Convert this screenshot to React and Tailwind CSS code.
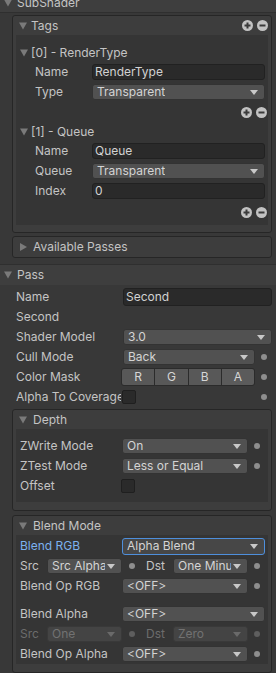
import React from 'react';

const Fold = ({ right }) => (
  <svg width="8" height="8" viewBox="0 0 8 8" className="shrink-0">
    {right ? (
      <polygon points="1,0 8,4 1,8" fill="#7a7a7a" />
    ) : (
      <polygon points="0,0.5 8,0.5 4,7.5" fill="#7a7a7a" />
    )}
  </svg>
);

const Caret = ({ dim }) => (
  <svg width="8" height="5" viewBox="0 0 8 5" className="absolute right-[6px] top-[5px]">
    <polygon points="0,0 8,0 4,5" fill={dim ? '#6a6a6a' : '#c8c8c8'} />
  </svg>
);

const PlusMinus = () => (
  <div className="flex gap-[4px]">
    <svg width="11" height="11" viewBox="0 0 11 11">
      <circle cx="5.5" cy="5.5" r="5.5" fill="#c2c2c2" />
      <path d="M2.5 5.5h6M5.5 2.5v6" stroke="#3a3a3a" strokeWidth="2" />
    </svg>
    <svg width="11" height="11" viewBox="0 0 11 11">
      <circle cx="5.5" cy="5.5" r="5.5" fill="#c2c2c2" />
      <path d="M2.5 5.5h6" stroke="#3a3a3a" strokeWidth="2" />
    </svg>
  </div>
);

const Dot = ({ dim }) => (
  <div className="w-[17px] shrink-0 pl-[6px] flex items-center">
    <div className={`w-[6px] h-[6px] rounded-full ${dim ? 'bg-[#5e5e5e]' : 'bg-[#8e8e8e]'}`} />
  </div>
);

const Field = ({ value, tall }) => (
  <div
    className={`flex-1 min-w-0 ${tall ? 'h-[18px]' : 'h-[16px]'} flex items-center rounded-[3px] bg-[#2a2a2a] border border-[#212121] pl-[2px] text-[#d2d2d2] whitespace-nowrap leading-[14px]`}
  >
    {value}
  </div>
);

const Drop = ({ value, dim, focus, className = 'flex-1' }) => (
  <div
    className={`${className} min-w-0 relative flex items-center rounded-[3px] pl-[4px] pr-[16px] whitespace-nowrap border ${
      focus
        ? 'bg-[#474747] border-[#4e8fdc] h-[17px]'
        : dim
        ? 'bg-[#444444] border-[#393939] h-[16px]'
        : 'bg-[#515151] border-[#333333] h-[16px]'
    } ${dim ? 'text-[#727272]' : 'text-[#d4d4d4]'}`}
  >
    <span className="overflow-hidden leading-[14px]">{value}</span>
    <Caret dim={dim} />
  </div>
);

const Box = ({ title, right, gap = 'gap-[6px]', extra, children, className = '' }) => (
  <div className={`ml-[12px] mr-[4px] border border-[#262626] rounded-[3px] bg-[#3d3d3d] ${className}`}>
    <div className={`h-[19px] flex items-center pl-[6px] pr-[3px] ${gap}`}>
      <Fold right={right} />
      <span className="flex-1">{title}</span>
      {extra}
    </div>
    {children}
  </div>
);

const Check = () => (
  <div className="w-[14px] h-[14px] shrink-0 rounded-[2px] bg-[#2a2a2a] border border-[#1f1f1f]" />
);

const App = () => {
  return (
    <div className="w-[276px] h-[673px] overflow-hidden bg-[#383838] font-[Inter,sans-serif] text-[12px] leading-none text-[#c4c4c4]">
      {/* SubShader header */}
      <div className="-mt-[7px] h-[20px] flex items-center gap-[5px] pl-[4px] bg-[#3e3e3e] border-b border-[#2f2f2f]">
        <Fold />
        <span>SubShader</span>
      </div>

      {/* Tags */}
      <Box title="Tags" gap="gap-[4px]" extra={<PlusMinus />} className="mt-[2px] pb-[7px]">
        <div className="mx-[3px] bg-[#353535] pt-[8px] pb-[2px]">
          <div className="h-[19px] flex items-center gap-[3px] pl-[4px]">
            <Fold />
            <span>[0] - RenderType</span>
          </div>
          <div className="h-[20px] flex items-center pl-[19px] pr-[3px]">
            <span className="w-[57px] shrink-0">Name</span>
            <Field value="RenderType" />
          </div>
          <div className="h-[20px] flex items-center pl-[19px] pr-[3px]">
            <span className="w-[57px] shrink-0">Type</span>
            <Drop value="Transparent" />
          </div>
          <div className="h-[21px] flex items-center justify-end pr-[1px]">
            <PlusMinus />
          </div>
          <div className="h-[18px] flex items-center gap-[3px] pl-[4px]">
            <Fold />
            <span>[1] - Queue</span>
          </div>
          <div className="h-[20px] flex items-center pl-[19px] pr-[3px]">
            <span className="w-[57px] shrink-0">Name</span>
            <Field value="Queue" />
          </div>
          <div className="h-[20px] flex items-center pl-[19px] pr-[3px]">
            <span className="w-[57px] shrink-0">Queue</span>
            <Drop value="Transparent" />
          </div>
          <div className="h-[20px] flex items-center pl-[19px] pr-[3px]">
            <span className="w-[57px] shrink-0">Index</span>
            <Field value="0" />
          </div>
          <div className="h-[22px] flex items-center justify-end pr-[1px]">
            <PlusMinus />
          </div>
        </div>
      </Box>

      {/* Available Passes */}
      <div className="ml-[12px] mr-[4px] mt-[3px] border border-[#262626] rounded-[3px] bg-[#3d3d3d] h-[22px] flex items-center gap-[6px] pl-[6px]">
        <Fold right />
        <span>Available Passes</span>
      </div>

      {/* Pass */}
      <div className="mt-[6px] h-[21px] flex items-center gap-[5px] pl-[4px] bg-[#3e3e3e] border-t border-[#2f2f2f]">
        <Fold />
        <span>Pass</span>
      </div>
      <div className="mt-[2px] pl-[16px] pr-[4px]">
        <div className="h-[20px] flex items-center">
          <span className="w-[107px] shrink-0">Name</span>
          <Field value="Second" tall />
        </div>
        <div className="h-[20px] flex items-center">
          <span>Second</span>
        </div>
        <div className="h-[20px] flex items-center">
          <span className="w-[107px] shrink-0">Shader Model</span>
          <Drop value="3.0" />
        </div>
        <div className="h-[20px] flex items-center">
          <span className="w-[107px] shrink-0">Cull Mode</span>
          <Drop value="Back" />
          <Dot />
        </div>
        <div className="h-[20px] flex items-center">
          <span className="w-[105px] shrink-0">Color Mask</span>
          <div className="flex-1 h-[18px] flex rounded-[3px] overflow-hidden border border-[#2b2b2b] bg-[#2b2b2b] gap-[1px] text-[#d6d6d6]">
            <div className="flex-1 bg-[#585858] flex items-center justify-center">R</div>
            <div className="flex-1 bg-[#585858] flex items-center justify-center">G</div>
            <div className="flex-1 bg-[#585858] flex items-center justify-center">B</div>
            <div className="flex-1 bg-[#5b5b5b] flex items-center justify-center">A</div>
          </div>
          <Dot />
        </div>
        <div className="h-[20px] flex items-center">
          <span className="w-[105px] shrink-0 overflow-hidden whitespace-nowrap leading-[16px]">Alpha To Coverage</span>
          <div className="ml-[1px] flex-1">
            <Check />
          </div>
          <Dot />
        </div>
      </div>

      {/* Depth */}
      <Box title="Depth" className="mt-[2px] pb-[8px]">
        <div className="mx-[3px] bg-[#353535] pt-[7px] pb-[6px] pl-[4px] pr-[3px]">
          <div className="h-[20px] flex items-center">
            <span className="w-[102px] shrink-0">ZWrite Mode</span>
            <Drop value="On" />
            <Dot />
          </div>
          <div className="h-[20px] flex items-center">
            <span className="w-[102px] shrink-0">ZTest Mode</span>
            <Drop value="Less or Equal" />
            <Dot />
          </div>
          <div className="h-[20px] flex items-center">
            <span className="w-[101px] shrink-0">Offset</span>
            <Check />
          </div>
        </div>
      </Box>

      {/* Blend Mode */}
      <Box title="Blend Mode" className="mt-[4px] pb-[8px]">
        <div className="mx-[3px] bg-[#353535] pt-[1px] pl-[4px] pr-[3px]">
          <div className="h-[20px] flex items-center">
            <span className="w-[102px] shrink-0 text-[#7cb1ef]">Blend RGB</span>
            <Drop value="Alpha Blend" focus />
          </div>
          <div className="h-[20px] flex items-center">
            <span className="w-[27px] shrink-0">Src</span>
            <Drop value="Src Alpha" className="w-[75px] shrink-0" />
            <div className="ml-[7px] w-[6px] h-[6px] rounded-full bg-[#8e8e8e] shrink-0" />
            <span className="ml-[11px] w-[27px] shrink-0">Dst</span>
            <Drop value="One Minus" />
            <Dot />
          </div>
          <div className="h-[20px] flex items-center">
            <span className="w-[102px] shrink-0">Blend Op RGB</span>
            <Drop value="<OFF>" />
            <Dot />
          </div>
          <div className="h-[8px]" />
          <div className="h-[20px] flex items-center">
            <span className="w-[102px] shrink-0">Blend Alpha</span>
            <Drop value="<OFF>" />
          </div>
          <div className="h-[20px] flex items-center text-[#6c6c6c]">
            <span className="w-[27px] shrink-0">Src</span>
            <Drop value="One" dim className="w-[75px] shrink-0" />
            <div className="ml-[7px] w-[6px] h-[6px] rounded-full bg-[#5e5e5e] shrink-0" />
            <span className="ml-[11px] w-[27px] shrink-0">Dst</span>
            <Drop value="Zero" dim />
            <Dot dim />
          </div>
          <div className="h-[20px] flex items-center">
            <span className="w-[102px] shrink-0">Blend Op Alpha</span>
            <Drop value="<OFF>" />
            <Dot />
          </div>
        </div>
      </Box>
    </div>
  );
};

export default App;
